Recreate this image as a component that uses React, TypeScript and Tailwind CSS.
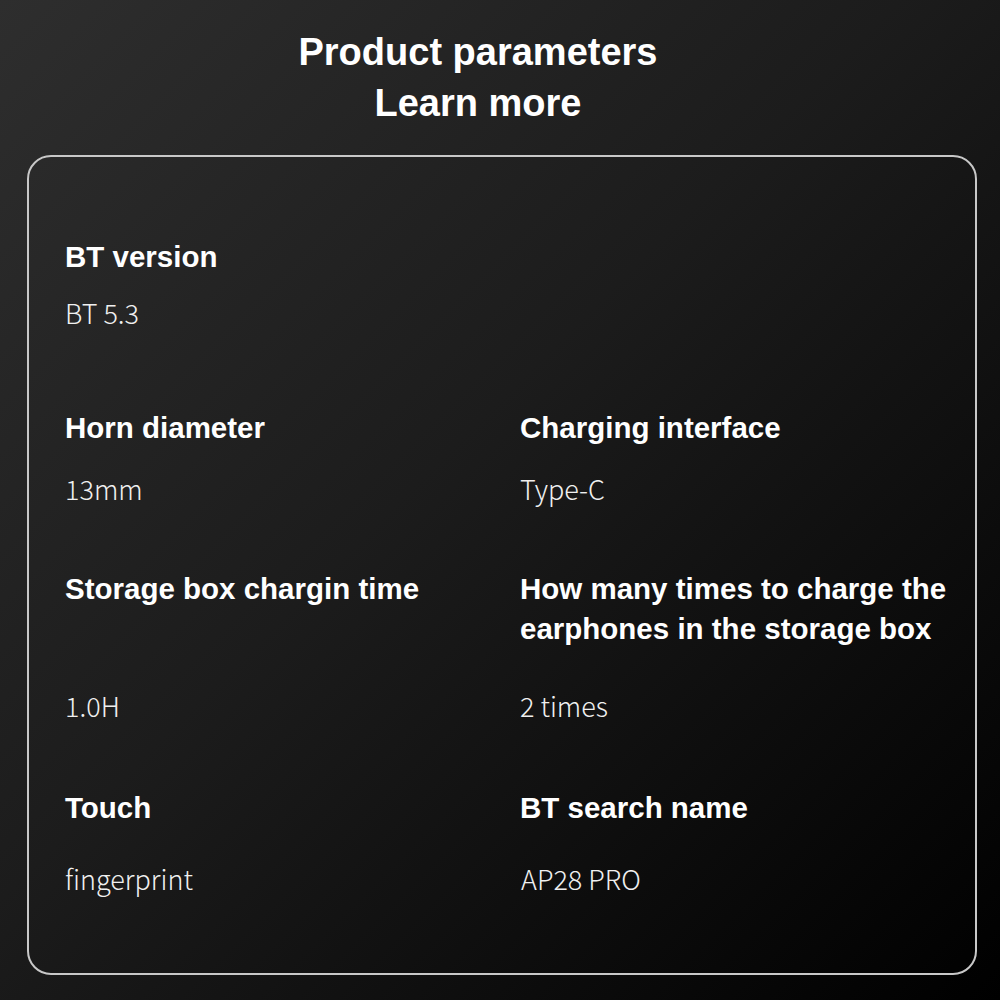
import React from "react";

const labelCls =
  "font-['Liberation_Sans',Arial,sans-serif] text-[29.5px] leading-[40px] font-bold text-white whitespace-nowrap";
const valueCls =
  "font-['Noto_Sans_CJK_SC','Noto_Sans',sans-serif] text-[27px] leading-[32px] font-light text-[#f0f0f0] whitespace-nowrap";

export default function App() {
  return (
    <div className="w-[1000px] h-[1000px] overflow-hidden bg-[linear-gradient(135deg,#2e2e2e_0%,#1c1c1c_45%,#000000_100%)]">
      <div className="pt-[27px] pr-[44px] text-center text-white font-bold text-[38px] leading-[51px] font-['Liberation_Sans',Arial,sans-serif]">
        <div>Product parameters</div>
        <div>Learn more</div>
      </div>

      <div className="ml-[27px] mt-[26px] w-[950px] h-[820px] rounded-[24px] border-[2.5px] border-[#c8c8c8] pl-[36px] pt-[80px]">
        <div className="grid grid-cols-[455px_1fr]">
          <div className={labelCls}>BT version</div>
          <div />
          <div className={`${valueCls} mt-[20px]`}>BT 5.3</div>
          <div className="mt-[20px]" />

          <div className={`${labelCls} mt-[79px]`}>Horn diameter</div>
          <div className={`${labelCls} mt-[79px]`}>Charging interface</div>
          <div className={`${valueCls} mt-[25px]`}>13mm</div>
          <div className={`${valueCls} mt-[25px]`}>Type-C</div>

          <div className={`${labelCls} mt-[64px]`}>Storage box chargin time</div>
          <div className={`${labelCls} mt-[64px]`}>
            How many times to charge the
            <br />
            earphones in the storage box
          </div>
          <div className={`${valueCls} mt-[41px]`}>1.0H</div>
          <div className={`${valueCls} mt-[41px]`}>2 times</div>

          <div className={`${labelCls} mt-[66px]`}>Touch</div>
          <div className={`${labelCls} mt-[66px]`}>BT search name</div>
          <div className={`${valueCls} mt-[35px]`}>fingerprint</div>
          <div className={`${valueCls} mt-[35px] pl-[1px]`}>AP28 PRO</div>
        </div>
      </div>
    </div>
  );
}
